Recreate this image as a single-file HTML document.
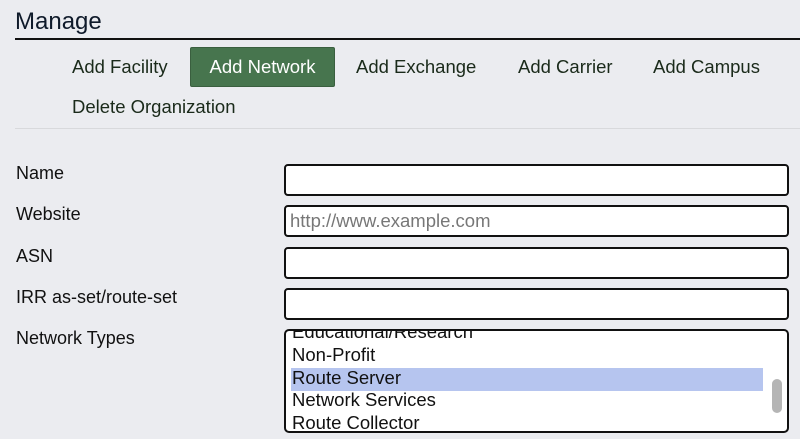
<!DOCTYPE html>
<html><head><style>
body{margin:0;width:800px;height:439px;background:#ebecf0;font-family:"Liberation Sans",sans-serif;color:#111;overflow:hidden;position:relative}
.a{position:absolute;white-space:nowrap}
.h{left:15px;top:8px;font-size:24px;color:#0f1a2a}
.line{left:15px;top:38px;width:785px;height:2px;background:#111}
.tab{font-size:18.5px;color:#1a2a1a}
.btn{left:190px;top:47px;width:143px;height:38px;background:#47754e;border:1px solid #3a5f3f;border-radius:2px;color:#fff;font-size:18.5px;text-align:center;line-height:38px}
.sep{left:15px;top:128px;width:785px;height:1px;background:#d8d9dc}
.lab{left:16px;font-size:18px;color:#111}
.in{left:284px;width:501px;height:28px;background:#fff;border:2px solid #111;border-radius:4px}
.ph{left:290px;top:210px;font-size:18.5px;color:#777}
.sel{left:284px;top:329px;width:501px;height:100px;background:#fff;border:2px solid #111;border-radius:5px;overflow:hidden}
.opt{position:absolute;left:6px;font-size:18.5px;color:#111}
</style></head><body>
<div class="a h">Manage</div>
<div class="a line"></div>
<div class="a tab" style="left:72px;top:56px">Add Facility</div>
<div class="a btn">Add Network</div>
<div class="a tab" style="left:356px;top:56px">Add Exchange</div>
<div class="a tab" style="left:518px;top:56px">Add Carrier</div>
<div class="a tab" style="left:653px;top:56px">Add Campus</div>
<div class="a tab" style="left:72px;top:96px">Delete Organization</div>
<div class="a sep"></div>
<div class="a lab" style="top:163px">Name</div>
<div class="a lab" style="top:204px">Website</div>
<div class="a lab" style="top:246px">ASN</div>
<div class="a lab" style="top:287px">IRR as-set/route-set</div>
<div class="a lab" style="top:328px">Network Types</div>
<div class="a in" style="top:164px"></div>
<div class="a in" style="top:205px"></div>
<div class="a ph">http://www.example.com</div>
<div class="a in" style="top:247px"></div>
<div class="a in" style="top:288px"></div>
<div class="a sel">
<div class="opt" style="top:-10px">Educational/Research</div>
<div class="opt" style="top:13px">Non-Profit</div>
<div style="position:absolute;left:5px;top:37px;width:472px;height:23px;background:#b6c5ef"></div>
<div class="opt" style="top:36px">Route Server</div>
<div class="opt" style="top:58px">Network Services</div>
<div class="opt" style="top:81px">Route Collector</div>
<div style="position:absolute;left:486px;top:48px;width:10px;height:34px;background:#b5b5b5;border-radius:5px"></div>
</div>
</body></html>
